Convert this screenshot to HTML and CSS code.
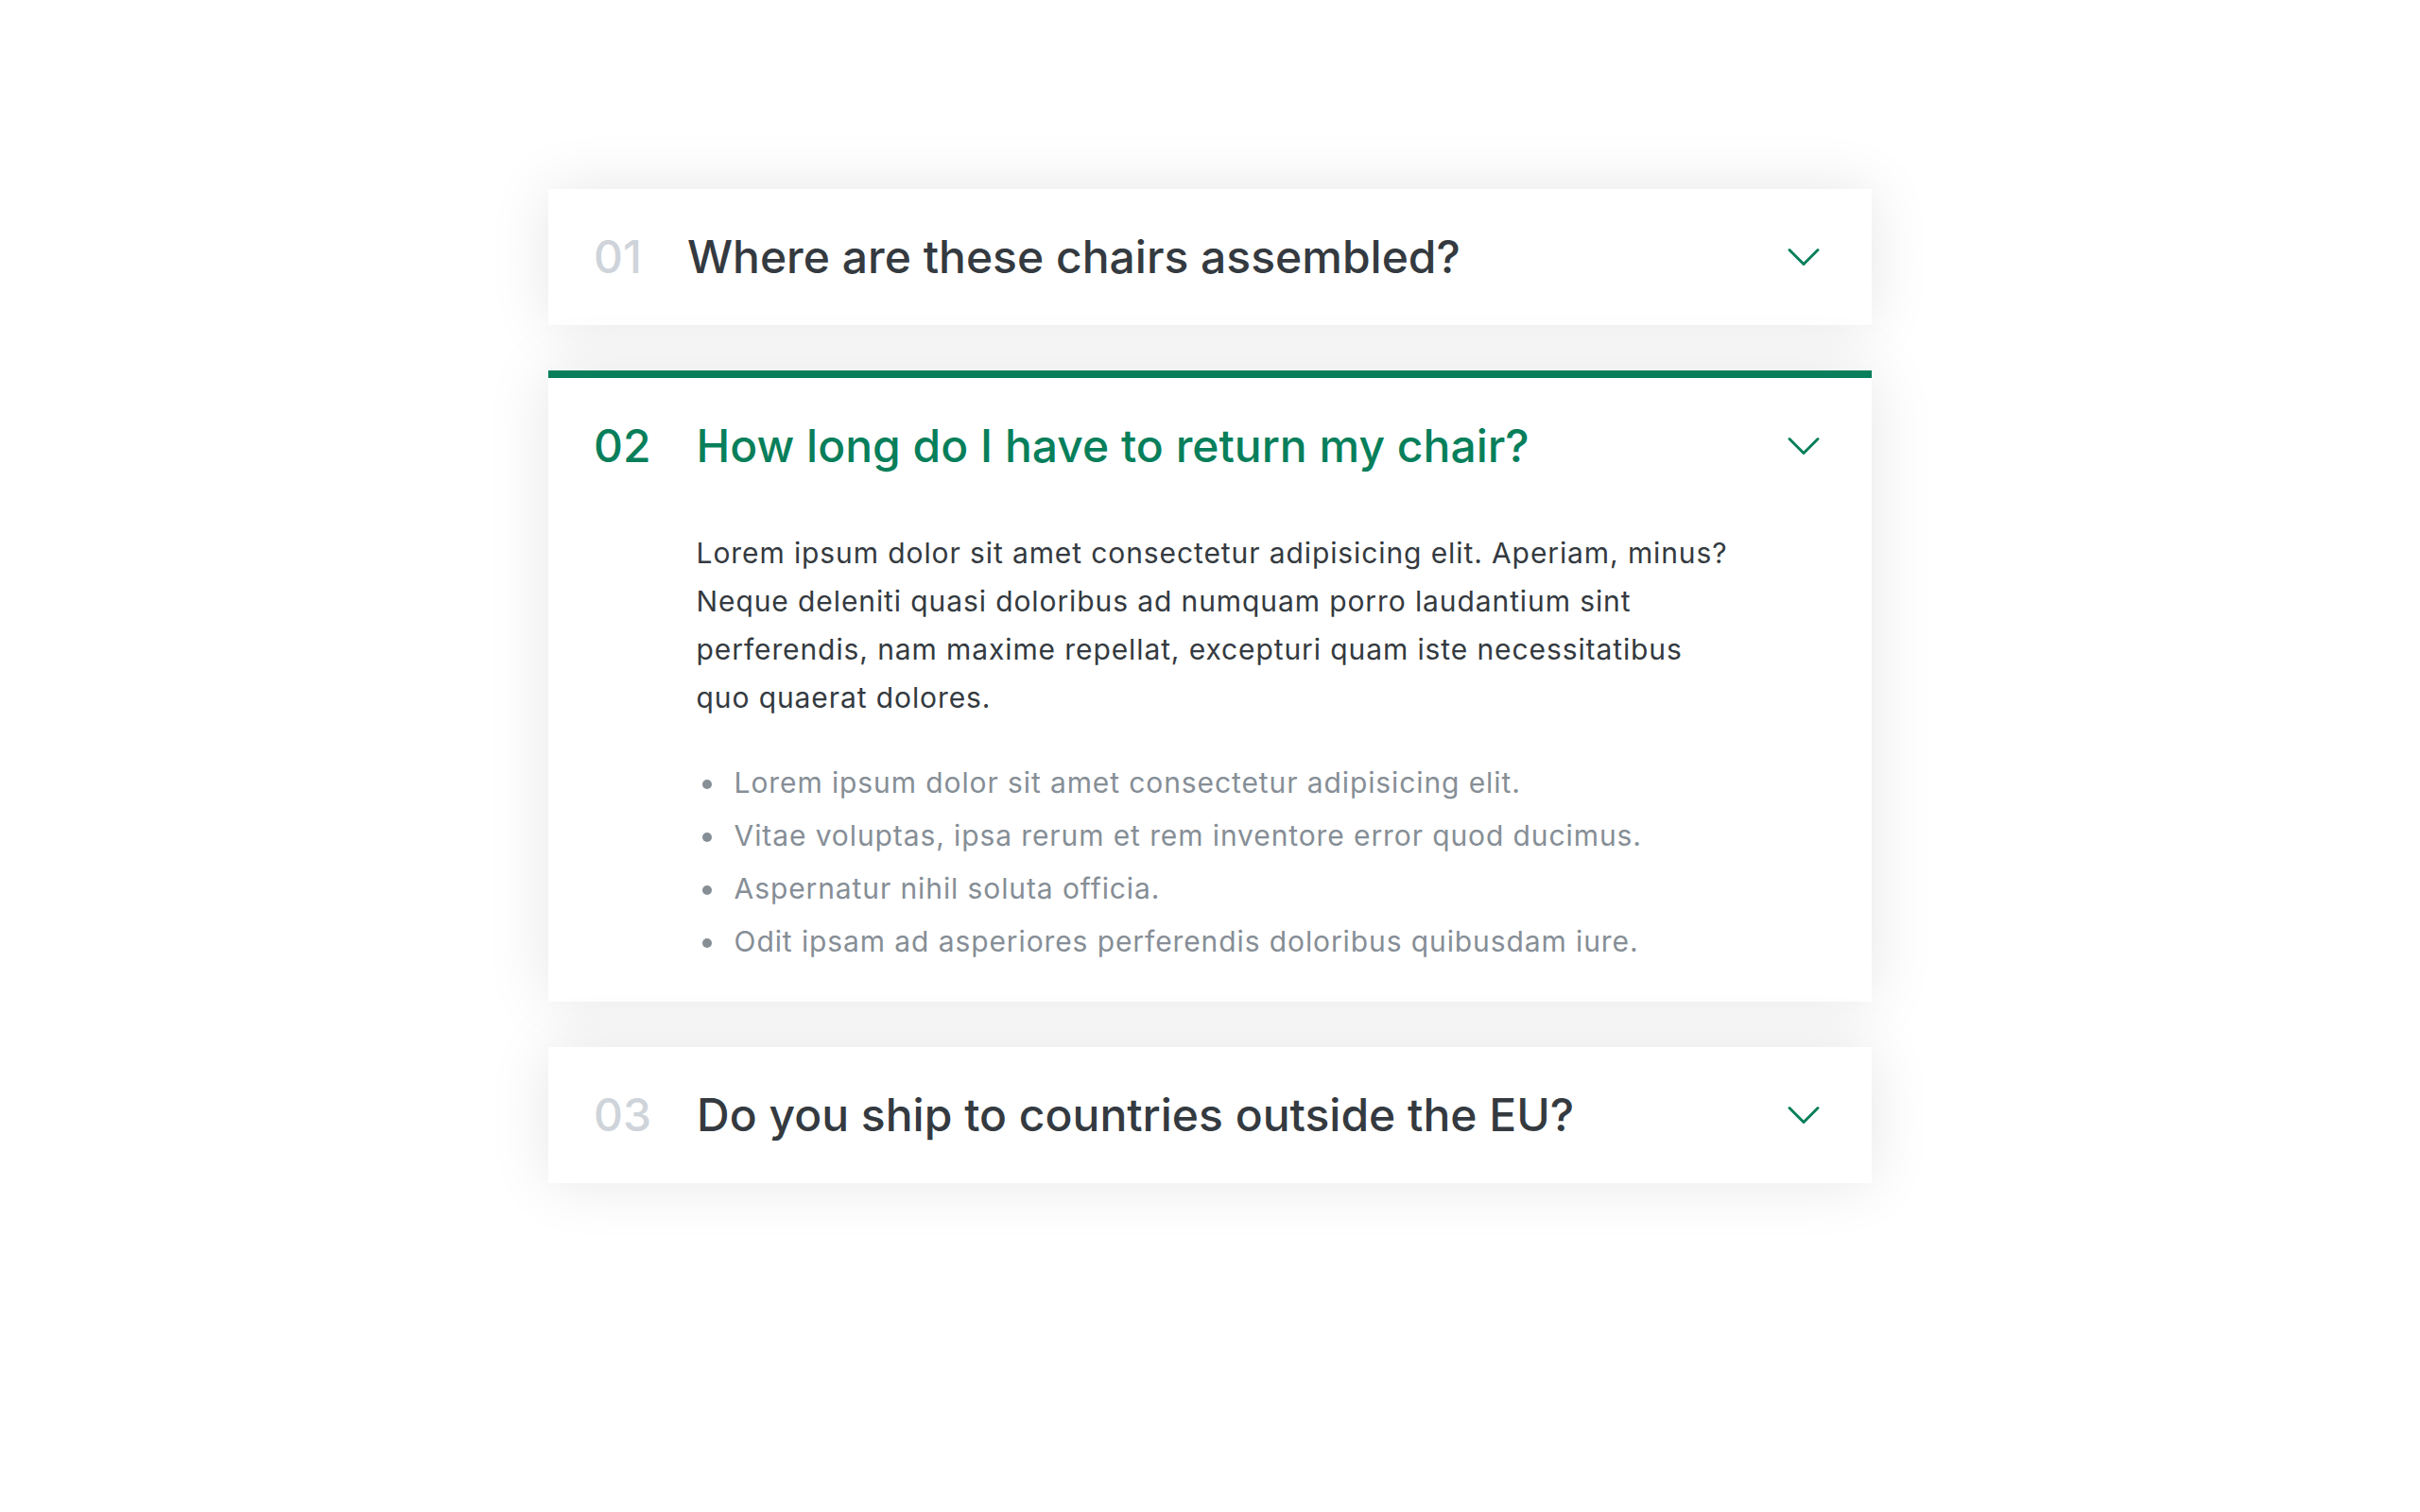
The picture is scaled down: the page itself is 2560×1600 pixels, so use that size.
FILE: index.html
```html
<!DOCTYPE html>
<html lang="en">
<head>
<meta charset="UTF-8">
<title>Accordion</title>
<link rel="stylesheet" href="styles.css">
</head>
<body>
<div class="accordion">
  <div class="item">
    <p class="number">01</p>
    <p class="text">Where are these chairs assembled?</p>
    <svg class="icon" xmlns="http://www.w3.org/2000/svg" fill="none" viewBox="0 0 24 24" stroke-width="1.5"><path stroke-linecap="round" stroke-linejoin="round" d="M19.5 8.25l-7.5 7.5-7.5-7.5"/></svg>
  </div>
  <div class="item open">
    <p class="number">02</p>
    <p class="text">How long do I have to return my chair?</p>
    <svg class="icon" xmlns="http://www.w3.org/2000/svg" fill="none" viewBox="0 0 24 24" stroke-width="1.5"><path stroke-linecap="round" stroke-linejoin="round" d="M19.5 8.25l-7.5 7.5-7.5-7.5"/></svg>
    <div class="hidden-box">
      <p>Lorem ipsum dolor sit amet consectetur adipisicing elit. Aperiam, minus? Neque deleniti quasi doloribus ad numquam porro laudantium sint perferendis, nam maxime repellat, excepturi quam iste necessitatibus quo quaerat dolores.</p>
      <ul>
        <li>Lorem ipsum dolor sit amet consectetur adipisicing elit.</li>
        <li>Vitae voluptas, ipsa rerum et rem inventore error quod ducimus.</li>
        <li>Aspernatur nihil soluta officia.</li>
        <li>Odit ipsam ad asperiores perferendis doloribus quibusdam iure.</li>
      </ul>
    </div>
  </div>
  <div class="item">
    <p class="number">03</p>
    <p class="text">Do you ship to countries outside the EU?</p>
    <svg class="icon" xmlns="http://www.w3.org/2000/svg" fill="none" viewBox="0 0 24 24" stroke-width="1.5"><path stroke-linecap="round" stroke-linejoin="round" d="M19.5 8.25l-7.5 7.5-7.5-7.5"/></svg>
  </div>
</div>
</body>
</html>
```
FILE: styles.css
```css
* {
  margin: 0;
  padding: 0;
  box-sizing: border-box;
}

html, body {
  background: #fff;
}

body {
  font-family: "Inter", "Noto Sans", sans-serif;
  color: #343a40;
  line-height: 1;
  font-size: 30px;
}

.accordion {
  width: 1400px;
  margin: 200px auto;
  display: flex;
  flex-direction: column;
  gap: 48px;
}

.item {
  background: #fff;
  box-shadow: 0 0 64px rgba(0, 0, 0, 0.1);
  padding: 48px;
  display: grid;
  grid-template-columns: auto 1fr auto;
  column-gap: 48px;
  row-gap: 64px;
  align-items: center;
}

.number,
.text {
  font-size: 48px;
  font-weight: 500;
  line-height: 48px;
}

.number {
  color: #ced4da;
}

.icon {
  width: 48px;
  height: 48px;
  stroke: #087f5b;
  display: block;
}

.hidden-box {
  grid-column: 2;
  letter-spacing: 0.9px;
}

.hidden-box p {
  line-height: 51px;
  margin-bottom: 48px;
}

.hidden-box ul {
  color: #868e96;
  margin-left: 32px;
  display: flex;
  flex-direction: column;
  gap: 24px;
}

.hidden-box li {
  line-height: 32px;
  padding-left: 8px;
}

.open {
  border-top: 8px solid #087f5b;
}

.open .number,
.open .text {
  color: #087f5b;
}
```
